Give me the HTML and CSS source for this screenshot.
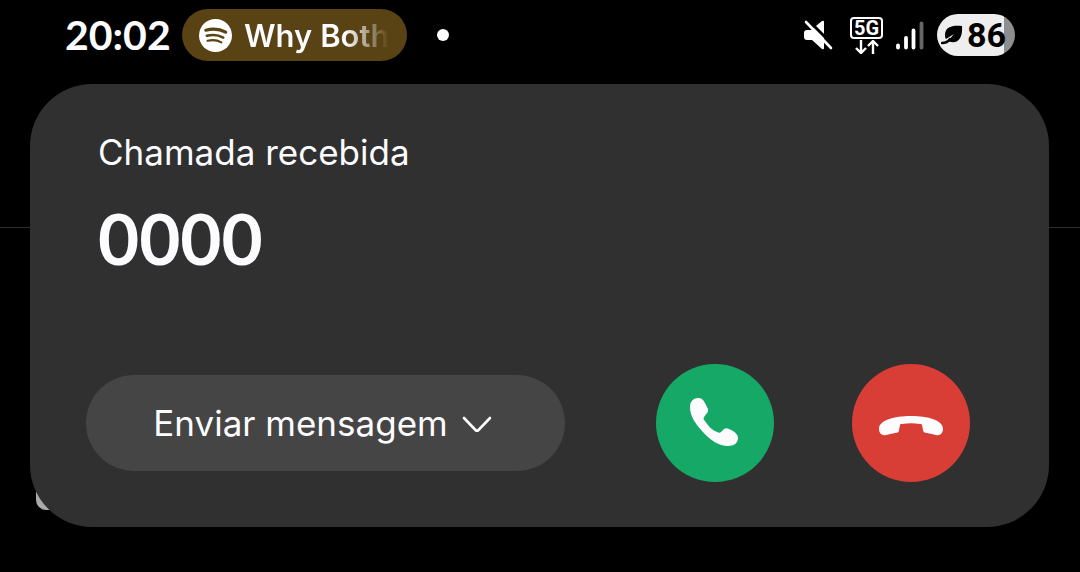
FILE: index.html
```html
<!DOCTYPE html>
<html lang="pt">
<head>
	<title>Chamada recebida</title>
	<meta charset="utf-8">
	<meta name="viewport" content="width=device-width, initial-scale=1">
	<link rel="stylesheet" href="styles.css">
</head>
<body>
	<header class="status">
		<span class="clock">20:02</span>
		<div class="media">
			<svg class="spotify" viewBox="0 0 34 34" aria-hidden="true">
				<circle cx="17" cy="17" r="17" fill="#fff"/>
				<g fill="none" stroke="#594213" stroke-linecap="round">
					<path d="M7 11.6c7-2 14.5-1.3 20.5 2" stroke-width="3.2"/>
					<path d="M8 17.3c6-1.6 12-1 17 1.8" stroke-width="2.6"/>
					<path d="M8.8 22.5c5-1.3 10-.8 14.2 1.6" stroke-width="2.2"/>
				</g>
			</svg>
			<span class="track">Why Both</span>
		</div>
		<span class="dot"></span>
		<div class="indicators">
			<svg class="mute" viewBox="0 0 30 30" role="img" aria-label="Som desativado">
				<path d="M4 10h4L19 1q2-1 2 1v26q0 2-2 1L9 20H4q-3 0-3-3v-4q0-3 3-3z" fill="#fff"/>
				<path d="M4-1l27 27" stroke="#000" stroke-width="3"/>
				<path d="M3 2l25 26" stroke="#fff" stroke-width="2.6" stroke-linecap="round"/>
			</svg>
			<div class="network">
				<span class="network-type">5G</span>
				<svg class="arrows" viewBox="0 0 24 14" aria-hidden="true">
					<path d="M6 0v13M1 8l5 5 5-5M18 14V1M13 6l5-5 5 5" fill="none" stroke="#fff" stroke-width="2.4"/>
				</svg>
			</div>
			<svg class="signal" viewBox="0 0 28 30" role="img" aria-label="Sinal">
				<g stroke="#fff" stroke-width="3.8" stroke-linecap="round">
					<path d="M2 25.5v2M10 18v9.5M17.5 10.5v17"/>
					<path d="M25.5 3.5v24" stroke="#666"/>
				</g>
			</svg>
			<div class="battery">
				<svg class="leaf" viewBox="0 0 22 20" aria-hidden="true">
					<path d="M21 1C11 0 4 2 4 10c0 2 .3 3 1 4l8-5-6 7c9 4 15-2 14-15z" fill="#000"/>
					<path d="M1 18c4 0 6-1 8-4" fill="none" stroke="#000" stroke-width="2.4" stroke-linecap="round"/>
				</svg>
				<span>86</span>
			</div>
		</div>
	</header>

	<main class="screen">
		<section class="call">
			<div class="caller">
				<p class="label">Chamada recebida</p>
				<h1 class="number">0000</h1>
			</div>
			<div class="actions">
				<button type="button" class="message">
					Enviar mensagem
					<svg class="chevron" viewBox="0 0 30 22" aria-hidden="true">
						<path d="M2 6l11.5 12q1.5 1.500 3 0L28 6" fill="none" stroke="#fcfcff" stroke-width="2.6" stroke-linecap="round" stroke-linejoin="round"/>
					</svg>
				</button>
				<button type="button" class="round answer" aria-label="Atender">
					<svg viewBox="0 0 118 118" aria-hidden="true">
						<path d="M34 43c0-6 4-9 8-9 3 0 5 1 7 5l3 6c0 2 0 3-1 4l-3 4c-1 2 0 3 1 4 3 5 7 9 12 11 2 1 3 1 4 0l3-3c2-1 3-1 5 0l4 2c3 2 5 4 5 7 0 5-4 8-10 8-9 0-18-6-26-15-7-8-12-15-12-24z" fill="#fcfcff"/>
					</svg>
				</button>
				<button type="button" class="round decline" aria-label="Recusar">
					<svg viewBox="0 0 118 118" aria-hidden="true">
						<path d="M27 65c0-9 15-13 32-13s32 4 32 13c0 4-3 7-7 6l-9-2c-3 0-4-2-4-3l-1-5c0-1-1-1-2-1-6-1-12-1-18 0-1 0-2 0-2 1l-1 5c0 2-1 3-4 3l-9 2c-4 1-7-2-7-6z" fill="#fcfcff"/>
					</svg>
				</button>
			</div>
		</section>
	</main>
</body>
</html>
```
FILE: styles.css
```css
* {
	box-sizing: border-box;
}
body {
	margin: 0;
	min-height: 100vh;
	font-family: "Inter", "Liberation Sans", sans-serif;
	color: #fcfcff;
	background-color: #000;
}
svg {
	display: block;
	flex: none;
}
.status {
	display: flex;
	align-items: center;
	height: 84px;
	padding: 0 65px 14px;
}
.clock {
	width: 117px;
	font-family: "Lato", sans-serif;
	font-size: 41px;
	font-weight: bold;
	line-height: 48px;
}
.media {
	display: flex;
	align-items: center;
	gap: 12px;
	width: 225px;
	height: 52px;
	padding: 0 20px 0 17px;
	border-radius: 26px;
	background-color: #594213;
}
.spotify {
	width: 33px;
	height: 33px;
}
.track {
	font-size: 31px;
	font-weight: 600;
	white-space: nowrap;
	color: transparent;
	background: linear-gradient(to right, #fcfcff 70%, #594213);
	-webkit-background-clip: text;
	background-clip: text;
}
.dot {
	width: 12px;
	height: 12px;
	margin-left: 30px;
	border-radius: 50%;
	background-color: #fff;
}
.indicators {
	display: flex;
	align-items: center;
	gap: 13px;
	margin-left: auto;
}
.mute {
	width: 30px;
	height: 30px;
	margin-right: 4px;
}
.network {
	display: flex;
	flex-direction: column;
	align-items: center;
	gap: 1px;
}
.network-type {
	width: 33px;
	border: 2px solid #fff;
	border-radius: 4px;
	font-family: "Roboto", sans-serif;
	font-size: 20px;
	font-weight: bold;
	line-height: 18px;
	text-align: center;
}
.arrows {
	width: 24px;
	height: 14px;
}
.signal {
	width: 28px;
	height: 30px;
}
.battery {
	display: flex;
	align-items: center;
	gap: 4px;
	width: 78px;
	height: 42px;
	padding-left: 4px;
	border-radius: 21px;
	font-family: "Roboto", sans-serif;
	font-size: 34px;
	font-weight: bold;
	color: #000;
	background: linear-gradient(to right, #eee 86%, #8e8e8e 86%);
}
.leaf {
	width: 22px;
	height: 20px;
}
.screen {
	position: relative;
	padding: 0 31px 0 30px;
}
/* divider and light tile of the app behind the call card */
.screen::before {
	content: "";
	position: absolute;
	top: 143px;
	left: 0;
	right: 0;
	height: 1px;
	background-color: #2f2f2f;
}
.screen::after {
	content: "";
	position: absolute;
	left: 36px;
	bottom: 17px;
	width: 40px;
	height: 40px;
	border-radius: 10px;
	background-color: #aaa;
}
.call {
	position: relative;
	z-index: 1;
	padding: 44px 79px 45px 56px;
	border-radius: 62px;
	background-color: #303030;
}
.caller {
	padding-left: 12px;
}
.label {
	margin: 0;
	font-size: 35px;
	line-height: 48px;
}
.number {
	margin: 20px 0 84px;
	font-family: "Lato", sans-serif;
	font-size: 71px;
	font-weight: bold;
	line-height: 84px;
}
.actions {
	display: flex;
	align-items: center;
}
button {
	border: 0;
	font: inherit;
	color: inherit;
	cursor: pointer;
}
.message {
	display: flex;
	flex: 1;
	align-items: center;
	justify-content: center;
	gap: 14px;
	height: 96px;
	margin-right: 91px;
	padding: 0 6px 0 0;
	border-radius: 48px;
	font-size: 35px;
	background-color: #454545;
}
.chevron {
	width: 30px;
	height: 22px;
}
.round {
	width: 118px;
	height: 118px;
	padding: 0;
	border-radius: 50%;
}
.answer {
	background-color: #16a866;
}
.decline {
	margin-left: 78px;
	background-color: #d93e36;
}
```
